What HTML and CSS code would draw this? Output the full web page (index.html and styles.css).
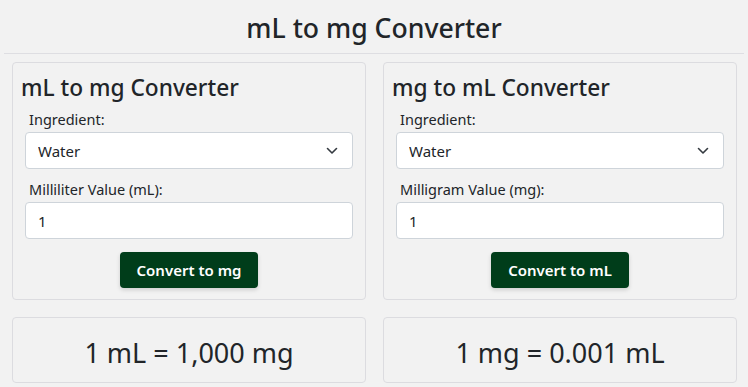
FILE: index.html
```html
<!DOCTYPE html>
<html lang="en">
<head>
    <meta charset="UTF-8">
    <meta name="viewport" content="width=device-width, initial-scale=1.0">
    <title>mL to mg Converter</title>
    <link rel="stylesheet" href="styles.css">
</head>
<body>
    <header class="page-header">
        <h1>mL to mg Converter</h1>
    </header>

    <div class="converter-grid">
        <div class="card">
            <h2>mL to mg Converter</h2>
            <div class="form-group">
                <label for="ingredientA">Ingredient:</label>
                <div class="select-wrap">
                    <select id="ingredientA" class="field">
                        <option>Water</option>
                    </select>
                    <svg class="chevron" viewBox="0 0 12 8" width="12" height="8"><path d="M1.5 1.5l4.5 4.5 4.5-4.5" fill="none" stroke="#343a40" stroke-width="1.6" stroke-linecap="round" stroke-linejoin="round"/></svg>
                </div>
            </div>
            <div class="form-group">
                <label for="mlValue">Milliliter Value (mL):</label>
                <input id="mlValue" class="field" type="text" value="1">
            </div>
            <div class="button-row">
                <button class="button">Convert to mg</button>
            </div>
        </div>

        <div class="card">
            <h2>mg to mL Converter</h2>
            <div class="form-group">
                <label for="ingredientB">Ingredient:</label>
                <div class="select-wrap">
                    <select id="ingredientB" class="field">
                        <option>Water</option>
                    </select>
                    <svg class="chevron" viewBox="0 0 12 8" width="12" height="8"><path d="M1.5 1.5l4.5 4.5 4.5-4.5" fill="none" stroke="#343a40" stroke-width="1.6" stroke-linecap="round" stroke-linejoin="round"/></svg>
                </div>
            </div>
            <div class="form-group">
                <label for="mgValue">Milligram Value (mg):</label>
                <input id="mgValue" class="field" type="text" value="1">
            </div>
            <div class="button-row">
                <button class="button">Convert to mL</button>
            </div>
        </div>

        <div class="card result">1 mL = 1,000 mg</div>
        <div class="card result">1 mg = 0.001 mL</div>
    </div>
</body>
</html>
```

FILE: styles.css
```css
body {
    font-family: 'Noto Sans', 'Open Sans', sans-serif;
    margin: 0;
    padding: 0;
    background-color: #f2f2f2;
    color: #212529;
}
.page-header {
    margin: 0 4px;
    height: 53px;
    border-bottom: 1px solid #dedee2;
    text-align: center;
}
h1 {
    margin: 0;
    padding-top: 12px;
    font-size: 26.6px;
    font-weight: 500;
    line-height: 32px;
}
.converter-grid {
    display: grid;
    grid-template-columns: 1fr 1fr;
    column-gap: 17px;
    row-gap: 17px;
    padding: 8px 11px 0 12px;
}
.card {
    border: 1px solid #dcdce0;
    border-radius: 4px;
    padding: 8px 12px 11px 12px;
}
h2 {
    margin: 0 0 0 -4px;
    font-size: 22.7px;
    font-weight: 500;
    line-height: 34px;
}
.form-group {
    margin-top: 4px;
}
.form-group + .form-group {
    margin-top: 10px;
}
.form-group label {
    display: block;
    padding-left: 4px;
    font-size: 14.5px;
    line-height: 20px;
    margin-bottom: 3px;
}
.select-wrap {
    position: relative;
}
.field {
    display: block;
    width: 100%;
    box-sizing: border-box;
    height: 37px;
    padding: 0 12px;
    font-family: inherit;
    font-size: 15px;
    color: #212529;
    background-color: #fff;
    border: 1px solid #ced4da;
    border-radius: 4px;
    appearance: none;
    -webkit-appearance: none;
    outline: none;
}
.chevron {
    position: absolute;
    right: 15px;
    top: 15px;
    pointer-events: none;
}
.button-row {
    text-align: center;
    margin-top: 13px;
}
.button {
    background-color: #003d1a;
    color: #fff;
    border: none;
    border-radius: 4px;
    height: 36px;
    padding: 0 17px;
    font-family: inherit;
    font-size: 15px;
    font-weight: 600;
    box-shadow: 0 2px 4px rgba(0,0,0,0.15);
    cursor: pointer;
}
.card.result {
    display: flex;
    align-items: center;
    justify-content: center;
    box-sizing: border-box;
    height: 66px;
    padding: 4px 0 0 0;
    font-size: 27px;
}
```
